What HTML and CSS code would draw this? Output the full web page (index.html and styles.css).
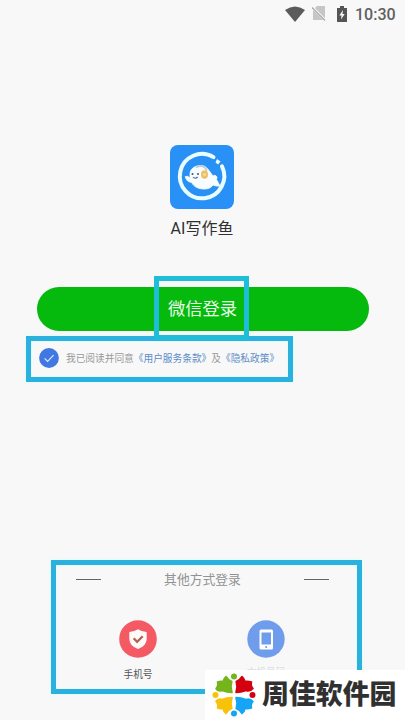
FILE: index.html
```html
<!DOCTYPE html>
<html lang="zh-CN">
<head>
<meta charset="utf-8">
<meta name="viewport" content="width=device-width, initial-scale=1">
<title>AI写作鱼</title>
<link rel="stylesheet" href="styles.css">
</head>
<body>
<div class="screen">
  <header class="status">
    <svg width="20" height="16" viewBox="0 0 20 16"><path d="M0 4Q10-3 20 4L10 16Z" fill="#5b5b5b"/></svg>
    <svg class="sim" width="14" height="15" viewBox="0 0 14 15"><path d="M5 0h8v14H1V4z" fill="#c6c6c6"/><path d="M0 1l14 14" stroke="#f8f8f8" stroke-width="2.500"/><path d="M0 1.500l13 13" stroke="#aaa" stroke-width="1.200"/></svg>
    <svg class="battery" width="10" height="16" viewBox="0 0 10 16"><path d="M3 0h4v2h3v14H0V2h3z" fill="#555"/><path d="M6 4L2.300 9.500h2.200L4 13.500 7.700 8H5.500z" fill="#f8f8f8"/></svg>
    <span class="clock">10:30</span>
  </header>

  <section class="brand">
    <svg class="logo" width="64" height="64" viewBox="0 0 64 64">
      <rect width="64" height="64" rx="8" fill="#2990f5"/>
      <path d="M43.500 12.100A22.200 22.200 0 1 0 52 21.400" fill="none" stroke="#e9fdff" stroke-width="4" stroke-linecap="round"/>
      <path d="M45.500 17.500l1.500-3.500 3.500 2.500-2.400 3z" fill="#e9fdff"/>
      <path d="M20 29C20 23 26 20.500 31 20.500C37 20.500 39 26 43 31Q44 30 45.500 30.500Q48 31.500 46.500 34.500L50 41Q46 41.500 43 40Q40 44.500 33 44Q25 43.500 21.500 37.500Q16 36.500 15.300 31.500Q18 30.500 20 33Z" fill="#f7fdff" stroke="#f7fdff" stroke-width=".8"/>
      <path d="M26 22.500q7-4 11 3" fill="none" stroke="#c0cdd2" stroke-width="1.800"/>
      <ellipse cx="34.500" cy="29.500" rx="3.500" ry="4.200" fill="#eec064"/>
      <circle cx="34.500" cy="29.500" r="1.300" fill="#fae1aa"/>
      <circle cx="22.500" cy="29" r="1" fill="#35537a"/><circle cx="28" cy="29" r="1" fill="#35537a"/>
      <path d="M23 32q2.200 2.400 4.600 0" fill="none" stroke="#45628a" stroke-width="1.100"/>
    </svg>
    <h1>AI写作鱼</h1>
  </section>

  <button class="wechat"><span>微信登录</span></button>

  <div class="consent">
    <svg width="20" height="20" viewBox="0 0 20 20"><circle cx="10" cy="10" r="9.900" fill="#4077e2"/><path d="M5.600 10.300l3 3 6-6.200" fill="none" stroke="#d9eaff" stroke-width="1.200"/></svg>
    <p>我已阅读并同意<a>《用户服务条款》</a>及<a>《隐私政策》</a></p>
  </div>

  <section class="other">
    <div class="divider"><i></i><span>其他方式登录</span><i></i></div>
    <div class="methods">
      <div class="method">
        <svg width="38" height="38" viewBox="0 0 38 38"><circle cx="19" cy="19" r="18.800" fill="#f35a64"/><path d="M19 9.300Q23 12 27.700 12V19Q27.500 26 19 29Q10.500 26 10.300 19V12Q15 12 19 9.300Z" fill="#fffafa"/><path d="M14.700 18.300l3.400 3.500 5.600-5.600" fill="none" stroke="#ad6554" stroke-width="2.300"/></svg>
        <span>手机号</span>
      </div>
      <div class="method">
        <svg width="38" height="38" viewBox="0 0 38 38"><circle cx="19" cy="19" r="18.700" fill="#6f9dec"/><rect x="12.500" y="9.500" width="13.500" height="20" rx="1.500" fill="#fff"/><rect x="14.500" y="12.500" width="9.500" height="12" fill="#6f9dec"/><circle cx="19.200" cy="27" r="1.100" fill="#6f9dec"/></svg>
        <span class="faint">本机号码</span>
      </div>
    </div>
  </section>

  <div class="frame frame-consent"></div>
  <div class="frame frame-button"></div>
  <div class="frame frame-other"></div>

  <div class="watermark">
    <svg width="44" height="44" viewBox="-22 -22 44 44">
      <g stroke-width="1.600" stroke-linejoin="round">
        <path d="M-2-2.500L-3-8L-2.200-13.500Q-6-15-8-18.500Q-10.500-16.500-11-13.500Q-14-14-16.500-13Q-15.500-9-18-6.500Q-16-3-12-4.500L-7-3Z" fill="#74b51c" stroke="#74b51c"/>
        <path d="M2-2.500L3-8L2.200-13.500Q6-15 8-18.500Q10.500-16.500 11-13.500Q14-14 17.500-13Q16.500-9 19-6.500Q16-3 12-4.500L7-3Z" fill="#d4000f" stroke="#d4000f"/>
        <path d="M-2 2.500L-3 8L-2.200 13.500Q-6 15-8 18.500Q-10.500 16.500-11 13.500Q-14 14-16.500 13Q-15.500 9-18 6.500Q-16 3-12 4.500L-7 3Z" fill="#f7c20a" stroke="#f7c20a"/>
        <path d="M2 2.500L3 8L2.200 13.500Q6 15 8 18.500Q10.500 16.500 11 13.500Q14 14 17.500 13Q16.500 9 19 6.500Q16 3 12 4.500L7 3Z" fill="#16a5f5" stroke="#16a5f5"/>
      </g>
      <circle cy="-18.500" r="3" fill="#74b51c"/><circle cx="18.500" r="3" fill="#d4000f"/><circle cx="-18.500" r="3" fill="#f7c20a"/><circle cy="18.500" r="3" fill="#16a5f5"/>
    </svg>
    <strong>周佳软件园</strong>
  </div>
</div>
</body>
</html>
```
FILE: styles.css
```css
* { box-sizing: border-box; }
body { margin: 0; font-family: Roboto, "Noto Sans CJK SC", sans-serif; }
.screen { position: relative; width: 405px; height: 720px; overflow: hidden; background: #f8f8f8; }
.status { display: flex; justify-content: flex-end; align-items: center; height: 27px; padding-right: 9px; }
.sim { margin-left: 7px; }
.battery { margin-left: 11px; }
.clock { margin-left: 8px; width: 41px; padding-top: 2px; font-size: 16px; line-height: 27px; font-weight: 500; color: #606060; white-space: nowrap; }
.brand { display: flex; flex-direction: column; align-items: center; padding-top: 118px; padding-right: 1px; }
.logo { display: block; }
h1 { margin: 8px 0 0; font-size: 16px; line-height: 24px; font-weight: 400; color: #303030; }
.wechat { display: block; width: 332px; height: 44px; margin: 46px 0 0 36.500px; padding: 0; border: 0; border-radius: 22px; background: #05b90d; color: #e9ffe9; font: 17.300px/42px Roboto, "Noto Sans CJK SC", sans-serif; }
.consent { display: flex; align-items: center; height: 20px; margin: 17px 0 0 39px; }
.consent p { margin: 2px 0 0 7px; font-size: 9.700px; line-height: 20px; color: #999; white-space: nowrap; }
.consent a { color: #5c8dc8; }
.other { margin-top: 200px; }
.divider { display: flex; justify-content: space-between; align-items: center; height: 22px; margin: 0 76px; font-size: 12.800px; color: #929292; }
.divider span { margin-top: -2px; }
.divider i { width: 25px; height: 1px; background: #656565; }
.methods { display: flex; padding: 30px 0 0 74px; }
.method { display: flex; flex-direction: column; align-items: center; width: 128px; }
.method svg { display: block; }
.method span { margin-top: 9px; font-size: 9.700px; line-height: 16px; color: #555; }
.method .faint { margin-top: 7px; color: #d8dce5; }
.frame { position: absolute; border: 5px solid #2bb1de; box-shadow: 0 0 2px 1px #e4fdff, inset 0 0 2px 1px #e4fdff; }
.frame-button { left: 154px; top: 276px; width: 95px; height: 64px; border-color: #1fbed8; box-shadow: none; }
.frame-consent { left: 26px; top: 336px; width: 267px; height: 46px; }
.frame-other { left: 51px; top: 560px; width: 311px; height: 134px; }
.watermark { position: absolute; left: 205px; top: 670px; display: flex; align-items: center; width: 200px; height: 50px; padding-left: 7px; background: #fff; }
.watermark strong { margin-left: 6px; font-size: 26.900px; line-height: 50px; font-weight: 900; color: #303030; white-space: nowrap; }
```
